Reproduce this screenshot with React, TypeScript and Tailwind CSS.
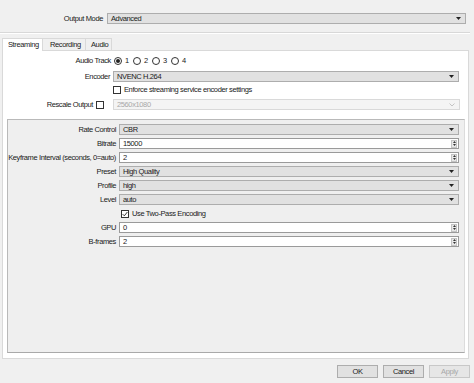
import React from 'react';

const font = "font-['Liberation_Sans',Arial,sans-serif]";

function Arrow() {
  return (
    <svg width="5" height="3" viewBox="0 0 5 3" className="shrink-0">
      <path d="M0 0h5L2.5 3z" fill="#222" />
    </svg>
  );
}

function Combo({ value, className = '' }: { value: string; className?: string }) {
  return (
    <div className={`h-[11px] flex items-center justify-between bg-[#e1e1e1] border border-[#adadad] pl-[3px] pr-[4px] ${className}`}>
      <span className="leading-none">{value}</span>
      <Arrow />
    </div>
  );
}

function DisabledCombo({ value }: { value: string }) {
  return (
    <div className="h-[11px] flex-1 flex items-center justify-between bg-[#f4f4f4] border border-[#d9d9d9] pl-[3px] pr-[4px] text-[#a8a8a8]">
      <span className="leading-none">{value}</span>
      <svg width="6" height="4" viewBox="0 0 6 4">
        <path d="M0.5 0.5L3 3l2.5-2.5" stroke="#b8b8b8" fill="none" strokeWidth="0.8" />
      </svg>
    </div>
  );
}

function Spin({ value }: { value: string }) {
  return (
    <div className="h-[11px] flex-1 flex items-center justify-between bg-white border border-[#9a9a9a] pl-[3px] pr-[1px]">
      <span className="leading-none">{value}</span>
      <div className="w-[6px] h-[8px] bg-[#e8e8e8] border border-[#c4c4c4] flex flex-col items-center justify-center gap-[1px]">
        <svg width="3" height="2" viewBox="0 0 3 2"><path d="M0 2h3L1.5 0z" fill="#333" /></svg>
        <svg width="3" height="2" viewBox="0 0 3 2"><path d="M0 0h3L1.5 2z" fill="#333" /></svg>
      </div>
    </div>
  );
}

function Check({ checked = false }: { checked?: boolean }) {
  return (
    <div className="w-[8px] h-[8px] bg-white border border-[#333] flex items-center justify-center shrink-0">
      {checked && (
        <svg width="6" height="6" viewBox="0 0 6 6">
          <path d="M0.6 3.1L2.3 4.8L5.4 1.0" stroke="#222" strokeWidth="0.9" fill="none" />
        </svg>
      )}
    </div>
  );
}

function Radio({ checked = false, label }: { checked?: boolean; label: string }) {
  return (
    <div className="flex items-center gap-[3px] w-[19px]">
      <div className="w-[8px] h-[8px] rounded-full bg-white border border-[#333] flex items-center justify-center shrink-0">
        {checked && <div className="w-[4px] h-[4px] rounded-full bg-[#222]" />}
      </div>
      <span className="leading-none">{label}</span>
    </div>
  );
}

function Row({ label, children, labelW, className = '' }: { label: string; children: React.ReactNode; labelW: string; className?: string }) {
  return (
    <div className={`flex items-center ${className}`}>
      <div className={`${labelW} text-right pr-[3px] leading-none whitespace-nowrap`}>{label}</div>
      {children}
    </div>
  );
}

export default function App() {
  return (
    <div className={`w-[474px] h-[383px] bg-[#f0f0f0] overflow-hidden text-[7.5px] tracking-[-0.38px] text-[#1a1a1a] ${font}`}>
      {/* Output mode */}
      <div className="pt-[13px] flex items-center">
        <div className="w-[107px] text-right pr-[4px] leading-none">Output Mode</div>
        <Combo value="Advanced" className="w-[359px]" />
      </div>
      <div className="mt-[8px] h-[2px] border-t border-[#d8d8d8] border-b border-b-white w-[470px]" />

      {/* Tabs */}
      <div className="mt-[3px] flex pl-[2px] h-[13px] items-end">
        <div className="h-[13px] w-[41px] pl-[5px] bg-white border border-b-0 border-[#d9d9d9] flex items-center leading-none relative z-10 -mb-px">Streaming</div>
        <div className="h-[12px] w-[43px] pl-[7px] bg-[#f0f0f0] border border-l-0 border-b-0 border-[#d9d9d9] flex items-center leading-none">Recording</div>
        <div className="h-[12px] w-[26px] pl-[5px] bg-[#f0f0f0] border border-l-0 border-b-0 border-[#d9d9d9] flex items-center leading-none">Audio</div>
      </div>

      {/* Pane */}
      <div className="ml-[2px] w-[467px] h-[309px] bg-white border border-[#d9d9d9] pt-[5px] flex flex-col">
        <Row label="Audio Track" labelW="w-[111px]" className="h-[10px]">
          <div className="flex items-center">
            <Radio checked label="1" />
            <Radio label="2" />
            <Radio label="3" />
            <Radio label="4" />
          </div>
        </Row>
        <Row label="Encoder" labelW="w-[110px]" className="mt-[5px]">
          <Combo value="NVENC H.264" className="w-[346px]" />
        </Row>
        <div className="mt-[4px] flex items-center pl-[110px] gap-[3px] h-[8px]">
          <Check />
          <span className="leading-none">Enforce streaming service encoder settings</span>
        </div>
        <Row label="Rescale Output" labelW="w-[93px]" className="mt-[5px]">
          <div className="flex items-center flex-1 pr-[8px] gap-[9px]">
            <Check />
            <DisabledCombo value="2560x1080" />
          </div>
        </Row>

        {/* Group box */}
        <div className="mt-[9px] ml-[4px] w-[458px] h-[234px] bg-[#efefef] border border-[#b9b9b9] border-r-[#dcdcdc] border-b-[#a9a9a9] pt-[4px] pr-[5px] flex flex-col gap-[3px]">
          <Row label="Rate Control" labelW="w-[111px]"><Combo value="CBR" className="flex-1" /></Row>
          <Row label="Bitrate" labelW="w-[111px]"><Spin value="15000" /></Row>
          <Row label="Keyframe Interval (seconds, 0=auto)" labelW="w-[111px]"><Spin value="2" /></Row>
          <Row label="Preset" labelW="w-[111px]"><Combo value="High Quality" className="flex-1" /></Row>
          <Row label="Profile" labelW="w-[111px]"><Combo value="high" className="flex-1" /></Row>
          <Row label="Level" labelW="w-[111px]"><Combo value="auto" className="flex-1" /></Row>
          <div className="flex items-center pl-[113px] gap-[3px] h-[9px] my-[1px]">
            <Check checked />
            <span className="leading-none">Use Two-Pass Encoding</span>
          </div>
          <Row label="GPU" labelW="w-[111px]"><Spin value="0" /></Row>
          <Row label="B-frames" labelW="w-[111px]"><Spin value="2" /></Row>
        </div>
      </div>

      {/* Buttons */}
      <div className="mt-[6px] flex justify-end gap-[5px] pr-[4px]">
        <div className="w-[41px] h-[13px] bg-[#e1e1e1] border border-[#adadad] flex items-center justify-center leading-none">OK</div>
        <div className="w-[41px] h-[13px] bg-[#e1e1e1] border border-[#adadad] flex items-center justify-center leading-none">Cancel</div>
        <div className="w-[41px] h-[13px] bg-[#e6e6e6] border border-[#c8c8c8] flex items-center justify-center leading-none text-[#a8a8a8]">Apply</div>
      </div>
    </div>
  );
}
